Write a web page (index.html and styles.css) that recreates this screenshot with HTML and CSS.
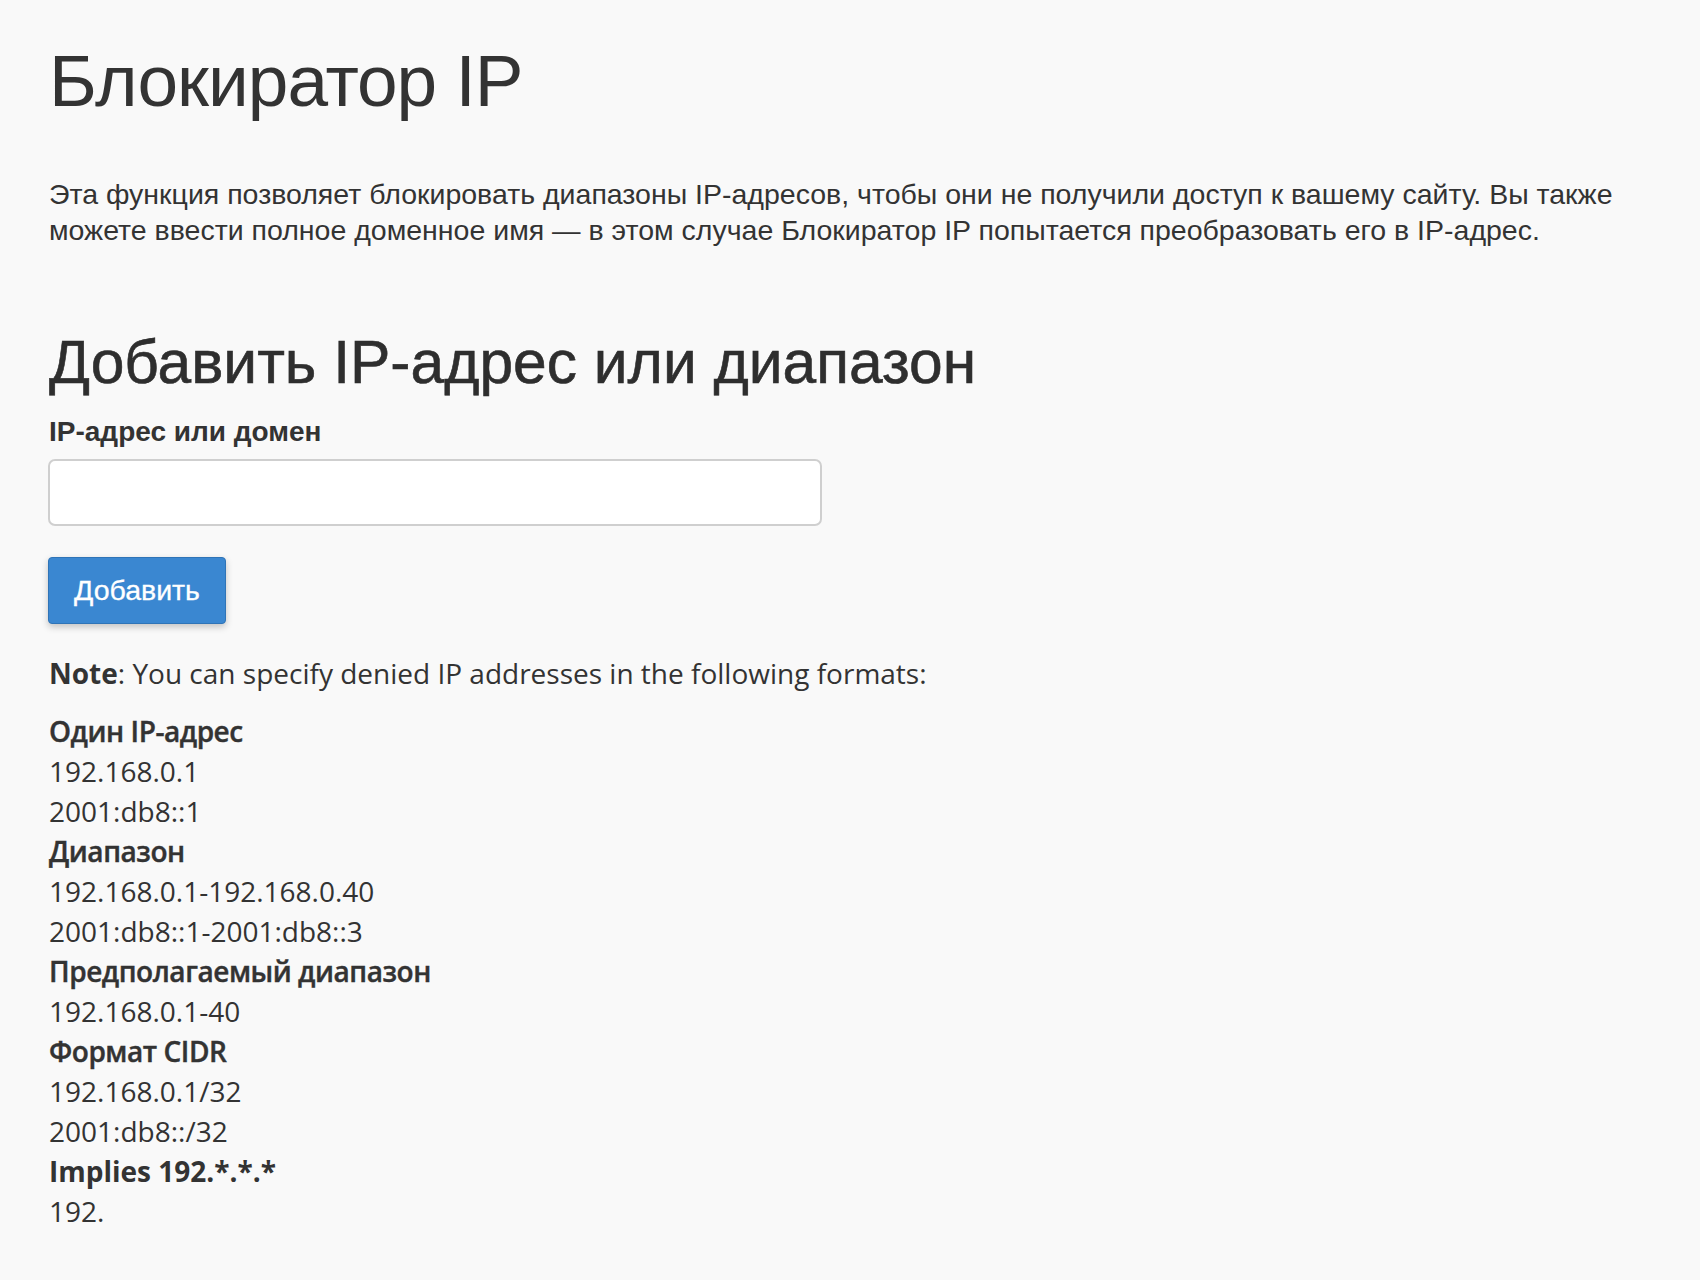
FILE: index.html
```html
<!DOCTYPE html>
<html lang="ru">
<head>
<meta charset="utf-8">
<title>Блокиратор IP</title>
<link rel="stylesheet" href="styles.css">
</head>
<body>
<main class="page">
  <h1 class="title">Блокиратор IP</h1>
  <p class="intro">Эта функция позволяет блокировать диапазоны IP-адресов, чтобы они не получили доступ к вашему сайту. Вы также можете ввести полное доменное имя — в этом случае Блокиратор IP попытается преобразовать его в IP-адрес.</p>
  <h2 class="section-title">Добавить IP-адрес или диапазон</h2>
  <form class="add-form">
    <label class="field-label" for="ip">IP-адрес или домен</label>
    <input class="field-input" id="ip" type="text">
    <button class="btn-primary" type="button">Добавить</button>
  </form>
  <p class="note"><strong>Note</strong>: You can specify denied IP addresses in the following formats:</p>
  <dl class="formats">
    <dt class="cyr">Один IP-адрес</dt>
    <dd>192.168.0.1</dd>
    <dd>2001:db8::1</dd>
    <dt class="cyr">Диапазон</dt>
    <dd>192.168.0.1-192.168.0.40</dd>
    <dd>2001:db8::1-2001:db8::3</dd>
    <dt class="cyr">Предполагаемый диапазон</dt>
    <dd>192.168.0.1-40</dd>
    <dt class="cyr">Формат CIDR</dt>
    <dd>192.168.0.1/32</dd>
    <dd>2001:db8::/32</dd>
    <dt>Implies 192.*.*.*</dt>
    <dd>192.</dd>
  </dl>
</main>
</body>
</html>
```
FILE: styles.css
```css
html, body {
  margin: 0;
  padding: 0;
  background: #f9f9f9;
}

body {
  color: #333333;
  font-family: "Liberation Sans", Arial, sans-serif;
}

.page {
  padding: 0 49px 40px;
}

.title {
  margin: 41px 0 0;
  font-size: 73px;
  line-height: 80px;
  font-weight: normal;
  letter-spacing: -1px;
  color: #333333;
}

.intro {
  margin: 55px 0 0;
  font-size: 28.5px;
  line-height: 36px;
}

.section-title {
  margin: 81px 0 0;
  font-size: 60.5px;
  line-height: 66px;
  font-weight: normal;
  color: #2e2e2e;
  -webkit-text-stroke: 0.6px #2e2e2e;
}

.add-form {
  display: flex;
  flex-direction: column;
  align-items: flex-start;
  margin: 0;
}

.field-label {
  margin-top: 19px;
  font-size: 28px;
  line-height: 36px;
  font-weight: bold;
}

.field-input {
  box-sizing: border-box;
  margin: 9px 0 0 -1px;
  width: 774px;
  height: 67px;
  border: 2px solid #cfcfcf;
  border-radius: 7px;
  background: #ffffff;
  font-size: 26px;
  padding: 0 14px;
}

.btn-primary {
  box-sizing: border-box;
  margin: 31px 0 0 -1px;
  width: 178px;
  height: 67px;
  background: #3a87d1;
  border: 1px solid #2f74b7;
  border-radius: 4px;
  box-shadow: 0 3px 7px rgba(0, 0, 0, 0.22);
  color: #ffffff;
  font-family: "Liberation Sans", Arial, sans-serif;
  font-size: 28.5px;
  -webkit-text-stroke: 0.3px #ffffff;
  padding: 0;
}

.note {
  margin: 29px 0 0;
  font-family: "Open Sans", sans-serif;
  font-size: 28px;
  line-height: 40px;
}

.note strong {
  font-weight: bold;
}

.formats {
  margin: 18px 0 0;
  font-family: "Open Sans", sans-serif;
  font-size: 28px;
  line-height: 40px;
}

.formats dt {
  font-weight: bold;
}

.formats dt.cyr {
  font-weight: 600;
  letter-spacing: -0.45px;
  -webkit-text-stroke: 0.4px #333333;
}

.formats dd {
  margin: 0;
}
```
